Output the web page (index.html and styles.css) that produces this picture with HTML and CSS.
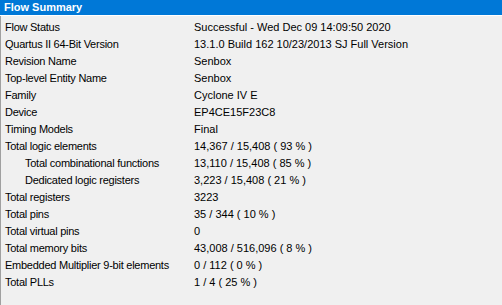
FILE: index.html
```
<!DOCTYPE html>
<html>
<head>
    <meta charset="utf-8" />
    <title>Flow Summary</title>
    <link rel="stylesheet" href="styles.css">
</head>
<body>
    <div class="summary">
        <div class="title">Flow Summary</div>
        <div class="rows">
            <div class="label">Flow Status</div><div class="value">Successful - Wed Dec 09 14:09:50 2020</div>
            <div class="label">Quartus II 64-Bit Version</div><div class="value">13.1.0 Build 162 10/23/2013 SJ Full Version</div>
            <div class="label">Revision Name</div><div class="value">Senbox</div>
            <div class="label">Top-level Entity Name</div><div class="value">Senbox</div>
            <div class="label">Family</div><div class="value">Cyclone IV E</div>
            <div class="label">Device</div><div class="value">EP4CE15F23C8</div>
            <div class="label">Timing Models</div><div class="value">Final</div>
            <div class="label">Total logic elements</div><div class="value">14,367 / 15,408 ( 93 % )</div>
            <div class="label sub">Total combinational functions</div><div class="value">13,110 / 15,408 ( 85 % )</div>
            <div class="label sub">Dedicated logic registers</div><div class="value">3,223 / 15,408 ( 21 % )</div>
            <div class="label">Total registers</div><div class="value">3223</div>
            <div class="label">Total pins</div><div class="value">35 / 344 ( 10 % )</div>
            <div class="label">Total virtual pins</div><div class="value">0</div>
            <div class="label">Total memory bits</div><div class="value">43,008 / 516,096 ( 8 % )</div>
            <div class="label">Embedded Multiplier 9-bit elements</div><div class="value">0 / 112 ( 0 % )</div>
            <div class="label">Total PLLs</div><div class="value">1 / 4 ( 25 % )</div>
        </div>
    </div>
</body>
</html>
```

FILE: styles.css
```
html,
body {
    margin: 0;
    padding: 0;
}

body {
    width: 502px;
    height: 305px;
    overflow: hidden;
    background: #f0f0f0;
    font: 11px/17px "Liberation Sans", Arial, sans-serif;
    color: #000;
}

.summary .title {
    height: 15px;
    padding-left: 4px;
    background: #0078d7;
    border-bottom: 1px solid #fff;
    color: #fff;
    font-weight: bold;
    font-size: 11px;
    line-height: 15px;
}

.summary .rows {
    display: grid;
    grid-template-columns: 189px 1fr;
    grid-auto-rows: 17px;
    padding: 3px 0 0 4px;
    border-left: 1px solid #a0a0a0;
    height: 300px;
}

.summary .label {
    letter-spacing: -0.25px;
}

.summary .sub {
    padding-left: 20px;
}
```
